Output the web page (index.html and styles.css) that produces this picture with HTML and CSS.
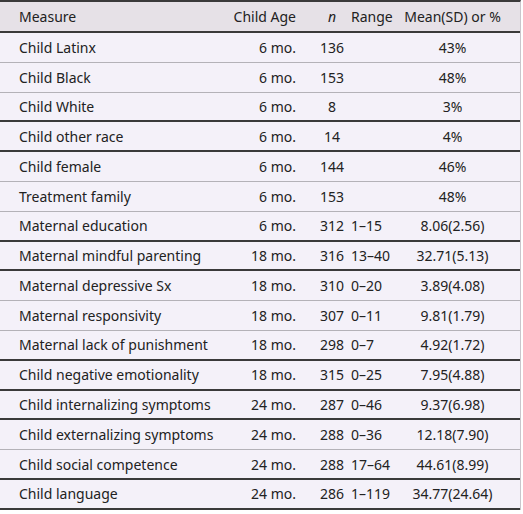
FILE: index.html
```html
<!DOCTYPE html>
<html lang="en">
<head>
  <meta charset="UTF-8">
  <meta name="viewport" content="width=device-width, initial-scale=1.0">
  <title>Sample characteristics</title>
  <link rel="stylesheet" href="styles.css">
</head>
<body>
  <div class="stats-table">
    <div class="row head thick">
      <div class="cell measure">Measure</div>
      <div class="cell age">Child Age</div>
      <div class="cell n"><i>n</i></div>
      <div class="cell range">Range</div>
      <div class="cell mean">Mean(SD) or %</div>
    </div>

    <div class="row">
      <div class="cell measure">Child Latinx</div>
      <div class="cell age">6 mo.</div>
      <div class="cell n">136</div>
      <div class="cell range"></div>
      <div class="cell mean">43%</div>
    </div>
    <div class="row">
      <div class="cell measure">Child Black</div>
      <div class="cell age">6 mo.</div>
      <div class="cell n">153</div>
      <div class="cell range"></div>
      <div class="cell mean">48%</div>
    </div>
    <div class="row thick">
      <div class="cell measure">Child White</div>
      <div class="cell age">6 mo.</div>
      <div class="cell n">8</div>
      <div class="cell range"></div>
      <div class="cell mean">3%</div>
    </div>
    <div class="row thick">
      <div class="cell measure">Child other race</div>
      <div class="cell age">6 mo.</div>
      <div class="cell n">14</div>
      <div class="cell range"></div>
      <div class="cell mean">4%</div>
    </div>
    <div class="row">
      <div class="cell measure">Child female</div>
      <div class="cell age">6 mo.</div>
      <div class="cell n">144</div>
      <div class="cell range"></div>
      <div class="cell mean">46%</div>
    </div>
    <div class="row">
      <div class="cell measure">Treatment family</div>
      <div class="cell age">6 mo.</div>
      <div class="cell n">153</div>
      <div class="cell range"></div>
      <div class="cell mean">48%</div>
    </div>
    <div class="row thick">
      <div class="cell measure">Maternal education</div>
      <div class="cell age">6 mo.</div>
      <div class="cell n">312</div>
      <div class="cell range">1–15</div>
      <div class="cell mean">8.06(2.56)</div>
    </div>
    <div class="row thick">
      <div class="cell measure">Maternal mindful parenting</div>
      <div class="cell age">18 mo.</div>
      <div class="cell n">316</div>
      <div class="cell range">13–40</div>
      <div class="cell mean">32.71(5.13)</div>
    </div>
    <div class="row">
      <div class="cell measure">Maternal depressive Sx</div>
      <div class="cell age">18 mo.</div>
      <div class="cell n">310</div>
      <div class="cell range">0–20</div>
      <div class="cell mean">3.89(4.08)</div>
    </div>
    <div class="row">
      <div class="cell measure">Maternal responsivity</div>
      <div class="cell age">18 mo.</div>
      <div class="cell n">307</div>
      <div class="cell range">0–11</div>
      <div class="cell mean">9.81(1.79)</div>
    </div>
    <div class="row thick">
      <div class="cell measure">Maternal lack of punishment</div>
      <div class="cell age">18 mo.</div>
      <div class="cell n">298</div>
      <div class="cell range">0–7</div>
      <div class="cell mean">4.92(1.72)</div>
    </div>
    <div class="row thick">
      <div class="cell measure">Child negative emotionality</div>
      <div class="cell age">18 mo.</div>
      <div class="cell n">315</div>
      <div class="cell range">0–25</div>
      <div class="cell mean">7.95(4.88)</div>
    </div>
    <div class="row thick">
      <div class="cell measure">Child internalizing symptoms</div>
      <div class="cell age">24 mo.</div>
      <div class="cell n">287</div>
      <div class="cell range">0–46</div>
      <div class="cell mean">9.37(6.98)</div>
    </div>
    <div class="row">
      <div class="cell measure">Child externalizing symptoms</div>
      <div class="cell age">24 mo.</div>
      <div class="cell n">288</div>
      <div class="cell range">0–36</div>
      <div class="cell mean">12.18(7.90)</div>
    </div>
    <div class="row thick">
      <div class="cell measure">Child social competence</div>
      <div class="cell age">24 mo.</div>
      <div class="cell n">288</div>
      <div class="cell range">17–64</div>
      <div class="cell mean">44.61(8.99)</div>
    </div>
    <div class="row thick">
      <div class="cell measure">Child language</div>
      <div class="cell age">24 mo.</div>
      <div class="cell n">286</div>
      <div class="cell range">1–119</div>
      <div class="cell mean">34.77(24.64)</div>
    </div>
  </div>
</body>
</html>
```

FILE: styles.css
```css
body {
  margin: 0;
  background: #ffffff;
  color: #222222;
  font-family: "Noto Sans", "Open Sans", sans-serif;
  font-size: 14px;
}

.stats-table {
  width: 521px;
  background: #f4f1f9;
  border-top: 2px solid #3a3a3a;
  border-right: 1px solid #c9c6cc;
  box-sizing: border-box;
}

.row {
  display: grid;
  grid-template-columns: 208px 106px 36px 50px 1fr;
  align-items: center;
  height: 29.8px;
  box-sizing: border-box;
  border-bottom: 1px solid #b4b2b8;
}

.row.thick {
  border-bottom: 2px solid #3a3a3a;
}

.row.head {
  height: 31px;
  background: #e6e1e7;
}

.cell {
  white-space: nowrap;
}

.measure {
  padding-left: 19px;
}

.age {
  text-align: right;
  padding-right: 18px;
}

.n {
  text-align: center;
}

.range {
  text-align: left;
  padding-left: 1px;
}

.mean {
  text-align: center;
  padding-right: 15px;
}
```
